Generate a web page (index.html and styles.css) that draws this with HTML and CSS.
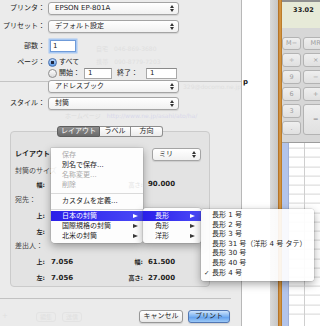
FILE: index.html
```html
<!DOCTYPE html>
<html lang="ja">
<head>
    <meta charset="UTF-8">
    <title>プリント</title>
    <link rel="stylesheet" href="styles.css">
</head>
<body>
<div id="desk">
    <div class="sheet">
        <div class="row printer">
            <span class="lbl">プリンタ：</span>
            <div class="popup">EPSON EP-801A</div>
        </div>
        <div class="row preset">
            <span class="lbl">プリセット：</span>
            <div class="popup">デフォルト設定</div>
        </div>
        <div class="row copies">
            <span class="lbl">部数：</span>
            <div class="field focus">1</div>
            <span class="ghost g1">自宅　046-869-3680</span>
        </div>
        <div class="row pages">
            <span class="lbl">ページ：</span>
            <span class="radio on"></span><span class="opt">すべて</span>
            <span class="ghost g2">携帯　090-8779-7203</span>
        </div>
        <div class="row range">
            <span class="lbl"></span>
            <span class="radio"></span><span class="opt">開始：</span>
            <div class="field from">1</div>
            <span class="opt to">終了：</span>
            <div class="field upto">1</div>
        </div>
        <div class="row panel">
            <span class="lbl"></span>
            <div class="popup">アドレスブック</div>
            <span class="ghost g3">329@docomo.ne.jp</span>
        </div>
        <div class="row style">
            <span class="lbl">スタイル：</span>
            <div class="popup">封筒</div>
        </div>
        <div class="ghostline">ホームページ　<span>http://www.ne.jp/asahi/ato/ha/</span></div>
        <div class="tabs">
            <span class="tab on">レイアウト</span><span class="tab">ラベル</span><span class="tab">方向</span>
        </div>
        <div class="box">
            <div class="brow first">
                <span class="head">レイアウト</span>
                <div class="popup unit">ミリ</div>
            </div>
            <div class="brow sec mt6">封筒のサイズ</div>
            <div class="brow dims mt4 short">
                <span class="k">幅:</span><span class="v"></span><span class="k">高さ:</span><span class="v r">90.000</span>
            </div>
            <div class="brow sec mt6">宛先：</div>
            <div class="brow dims mt6">
                <span class="k">上:</span>
            </div>
            <div class="brow dims mt6">
                <span class="k">左:</span>
            </div>
            <div class="brow sec mt4">差出人：</div>
            <div class="brow dims mt6">
                <span class="k">上:</span><span class="v">7.056</span><span class="k">幅:</span><span class="v r">61.500</span>
            </div>
            <div class="brow dims mt6">
                <span class="k">左:</span><span class="v">7.056</span><span class="k">高さ:</span><span class="v r">27.000</span>
            </div>
        </div>
        <div class="divider"></div>
        <div class="buttons">
            <span class="ghost plus">+</span>
            <span class="ghost gbtn">編集</span>
            <span class="ghost gbtn">送信</span>
            <span class="btn cancel">キャンセル</span>
            <span class="btn print">プリント</span>
        </div>
    </div>
    <div class="gap">p</div>
    <div class="edge"></div>
    <div class="wood"></div>
    <div class="calc-col">
        <div class="calc">
            <div class="display">33.02</div>
            <div class="keys">
                <span>M−</span><span>MR</span>
                <span>÷</span><span>×</span>
                <span>9</span><span>−</span>
                <span>6</span><span>+</span>
                <span>3</span><span class="tall">=</span>
                <span>.</span>
            </div>
        </div>
        <div class="cells">
            <div class="hdr"></div>
            <div class="grid"></div>
        </div>
    </div>

    <div class="menu m1">
        <div class="mi off">保存</div>
        <div class="mi">別名で保存...</div>
        <div class="mi off">名称変更...</div>
        <div class="mi off">削除</div>
        <div class="msep"></div>
        <div class="mi">カスタムを定義...</div>
        <div class="msep short"></div>
        <div class="mi sub hi">日本の封筒</div>
        <div class="mi sub">国際規格の封筒</div>
        <div class="mi sub">北米の封筒</div>
    </div>
    <div class="menu m2">
        <div class="mi sub hi">長形</div>
        <div class="mi sub">角形</div>
        <div class="mi sub">洋形</div>
    </div>
    <div class="menu m3">
        <div class="mi">長形 1 号</div>
        <div class="mi">長形 2 号</div>
        <div class="mi">長形 3 号</div>
        <div class="mi">長形 31 号（洋形 4 号 タテ）</div>
        <div class="mi">長形 30 号</div>
        <div class="mi">長形 40 号</div>
        <div class="mi checked">長形 4 号</div>
    </div>
</div>
</body>
</html>
```

FILE: styles.css
```css
*{
    margin: 0;
    padding: 0;
    box-sizing: border-box;
}
html, body{
    width: 320px;
    height: 326px;
    overflow: hidden;
}
body{
    font-family: "DejaVu Sans", "Noto Sans CJK JP", sans-serif;
    font-size: 7px;
    line-height: 1;
    color: #222;
    background: #fff;
}
#desk{
    position: relative;
    display: flex;
    width: 320px;
    height: 326px;
}

/* print sheet */
.sheet{
    flex: 0 0 236px;
    display: flex;
    flex-direction: column;
    background: #ebebeb;
    border-right: 1px solid #b8b8b8;
}
.row{
    display: flex;
    align-items: center;
    height: 13px;
    white-space: nowrap;
}
.lbl{
    flex: 0 0 45px;
    text-align: right;
}
.printer{ margin-top: 2px; }
.preset{ margin-top: 5px; }
.copies{ margin-top: 7px; height: 12px; }
.pages{ margin-top: 5px; height: 10px; }
.range{ margin-top: 1px; height: 11px; }
.panel{
    margin-top: 1px;
    background: linear-gradient(to bottom, transparent 1px, #c4c4c4 1px, #c4c4c4 2px, transparent 2px);
}
.style{ margin-top: 4px; }

.popup{
    position: relative;
    flex: 0 0 131px;
    width: 131px;
    height: 13px;
    margin-left: 3px;
    padding-left: 6px;
    line-height: 11px;
    border: 1px solid #a4a4a4;
    border-radius: 3px;
    background: linear-gradient(#ffffff, #f1f1f1);
    box-shadow: 0 1px 1px rgba(0,0,0,0.1);
}
.popup:before,
.popup:after{
    content: "";
    position: absolute;
    right: 4px;
    border-left: 2px solid transparent;
    border-right: 2px solid transparent;
}
.popup:before{
    top: 2px;
    border-bottom: 3px solid #333;
}
.popup:after{
    bottom: 2px;
    border-top: 3px solid #333;
}

.field{
    height: 100%;
    background: #fff;
    border: 1px solid #a9a9a9;
    border-top-color: #8a8a8a;
    padding-left: 3px;
    line-height: 9px;
}
.field.focus{
    width: 26px;
    margin-left: 5px;
    padding-left: 2px;
    line-height: 10px;
    border-color: #6f9bd9;
    box-shadow: 0 0 0 1.5px #a8c8f2;
}
.field.from{
    width: 28px;
    margin-left: 4px;
}
.field.upto{
    width: 31px;
    margin-left: 8px;
}
.radio{
    width: 9px;
    height: 9px;
    margin-left: 3px;
    border-radius: 50%;
    border: 1px solid #8d8d8d;
    background: linear-gradient(#fdfdfd, #dadada);
}
.radio.on{
    border-color: #4a70ad;
    background: radial-gradient(circle, #1d2640 0, #1d2640 1.4px, transparent 2px), linear-gradient(#bcd8f8, #5797e4);
}
.opt{ margin-left: 2px; }
.opt.to{ margin-left: 5px; }

.ghost{
    color: #dfdfdf;
    font-size: 6px;
}
.g1{ margin-left: 20px; align-self: flex-end; }
.g2{ margin-left: 17px; }
.g3{ margin-left: 4px; }
.ghostline{
    height: 16px;
    padding: 3px 0 0 65px;
    font-size: 6px;
    color: #dcdcdc;
    white-space: nowrap;
}
.ghostline span{ color: #d8d8ea; }

/* tabs + group box */
.tabs{
    position: relative;
    z-index: 1;
    display: flex;
    justify-content: center;
    width: 200px;
    height: 11px;
    margin-left: 10px;
}
.tab{
    height: 11px;
    line-height: 9px;
    text-align: center;
    border: 1px solid #8e8e8e;
    border-left-width: 0;
    background: linear-gradient(#ffffff, #ebebeb);
}
.tab:first-child{
    width: 43px;
    border-left-width: 1px;
    border-radius: 3px 0 0 3px;
}
.tab:nth-child(2){ width: 31px; }
.tab:last-child{
    width: 32px;
    border-radius: 0 3px 3px 0;
}
.tab.on{
    color: #fff;
    border-color: #5e5e5e;
    background: linear-gradient(#8e8e8e, #6b6b6b);
}
.box{
    display: flex;
    flex-direction: column;
    width: 200px;
    height: 156px;
    margin: -6px 0 0 10px;
    padding: 17px 8px 0 4px;
    background: #e3e3e3;
    border: 1px solid #cbcbcb;
    border-radius: 4px;
}
.brow{
    display: flex;
    align-items: center;
    height: 10px;
    white-space: nowrap;
}
.brow.first{
    height: 11px;
    justify-content: space-between;
}
.head{ font-weight: bold; }
.popup.unit{
    flex: 0 0 49px;
    width: 49px;
    margin-left: 0;
}
.sec{ color: #474747; }
.mt4{ margin-top: 4px; }
.mt6{ margin-top: 6px; }
.brow.dims{
    display: grid;
    grid-template-columns: 30px 82px 16px 1fr;
    align-items: center;
}
.brow.short{ height: 9px; }
.k{
    text-align: right;
    font-size: 6px;
    font-weight: bold;
}
.v{
    padding-left: 6px;
    font-weight: bold;
}
.v.r{ padding-left: 5px; }

.divider{
    height: 1px;
    margin: 11px 10px 0 0;
    background: #c2c2c2;
}
.buttons{
    display: flex;
    align-items: center;
    height: 13px;
    margin-top: 11px;
    padding-right: 11px;
}
.plus{
    margin-left: 2px;
    font-size: 7px;
}
.gbtn{
    margin-left: 28px;
    padding: 1px 3px;
    border: 1px solid #e3e3e3;
    border-radius: 3px;
}
.gbtn + .gbtn{ margin-left: 6px; }
.btn{
    height: 13px;
    line-height: 11px;
    text-align: center;
    border: 1px solid #979797;
    border-radius: 3px;
    background: linear-gradient(#ffffff, #e8e8e8);
    box-shadow: 0 1px 1px rgba(0,0,0,0.12);
}
.btn.cancel{
    width: 44px;
    margin-left: auto;
}
.btn.print{
    width: 42px;
    margin-left: 5px;
    border-color: #5277b3;
    background: linear-gradient(#cfe5fc, #7ab1f1 50%, #5e9dec 51%, #9cc9f7);
}

/* background windows */
.gap{
    flex: 0 0 28px;
    padding: 79px 0 0 1px;
    background: #fff;
    font-weight: bold;
    color: #111;
}
.edge{
    flex: 0 0 8px;
    background: linear-gradient(to right, #dadada, #c6c6c6);
}
.wood{
    flex: 0 0 4px;
    background: linear-gradient(to right, #a6641e, #dea04b 50%, #b0701f);
}
.calc-col{
    flex: 0 0 44px;
    display: flex;
    flex-direction: column;
    overflow: hidden;
}
.calc{
    height: 143px;
    background: #d7d7d7;
    border-bottom: 1px solid #9c9c9c;
}
.display{
    height: 28px;
    padding: 5px 0 0 11px;
    border-top: 2px solid #8f8f8f;
    background: #e7ead8;
    font-size: 6.5px;
    font-weight: bold;
    color: #222;
}
.keys{
    display: grid;
    grid-template-columns: 19px 25px;
    grid-template-rows: 13px repeat(5, 14px);
    column-gap: 2px;
    row-gap: 3px;
    padding-top: 9px;
}
.keys span{
    display: flex;
    align-items: center;
    justify-content: center;
    border: 1px solid #b3b3b3;
    border-radius: 3px;
    background: linear-gradient(#efefef, #e0e0e0);
    color: #9d9d9d;
    font-size: 6.5px;
}
.keys .tall{ grid-row: span 2; }
.cells{
    flex: 1;
    display: flex;
}
.hdr{
    flex: 0 0 7px;
    background: #b3c4ea;
    border-right: 1px solid #9fb0d8;
}
.grid{
    flex: 1;
    background-color: #fff;
    background-image:
        linear-gradient(to right, transparent 15px, #cfcfcf 15px, #cfcfcf 16px, transparent 16px),
        repeating-linear-gradient(to bottom, transparent 0, transparent 8.2px, #d6d6d6 8.2px, #d6d6d6 9.2px);
    background-position: 0 0, 0 -3.4px;
}

/* menus */
.menu{
    position: absolute;
    z-index: 5;
    padding: 2px 0;
    background: rgba(255,255,255,0.9);
    border-radius: 0 0 4px 4px;
    box-shadow: 0 3px 9px rgba(0,0,0,0.35), 0 0 0 0.5px rgba(0,0,0,0.15);
}
.m1{
    left: 51px;
    top: 148px;
    width: 92px;
}
.m2{
    left: 143px;
    top: 208px;
    width: 58px;
    padding-top: 3px;
    border-radius: 3px;
}
.m3{
    left: 201px;
    top: 209px;
    width: 113px;
    padding-bottom: 3px;
    border-radius: 3px;
}
.mi{
    position: relative;
    height: 10px;
    line-height: 10px;
    padding-left: 11px;
    color: #1c1c1c;
    white-space: nowrap;
}
.m2 .mi{ padding-left: 12px; }
.m3 .mi{
    height: 9.6px;
    line-height: 9.6px;
}
.mi.off{ color: #a9a9a9; }
.mi.hi{
    color: #fff;
    background: linear-gradient(to right, #2a1ee9, #4a4af7);
}
.mi.sub:after{
    content: "";
    position: absolute;
    right: 5px;
    top: 2.5px;
    border-left: 5px solid #3a3a3a;
    border-top: 2.5px solid transparent;
    border-bottom: 2.5px solid transparent;
}
.m2 .mi.sub:after{ right: 6px; }
.mi.sub.hi:after{ border-left-color: #fff; }
.mi.checked:before{
    content: "✓";
    position: absolute;
    left: 3px;
    font-size: 6.5px;
}
.msep{
    height: 6px;
    background: linear-gradient(transparent 2.5px, #dadada 2.5px, #dadada 3.5px, transparent 3.5px);
}
.msep.short{ height: 5px; }
```
